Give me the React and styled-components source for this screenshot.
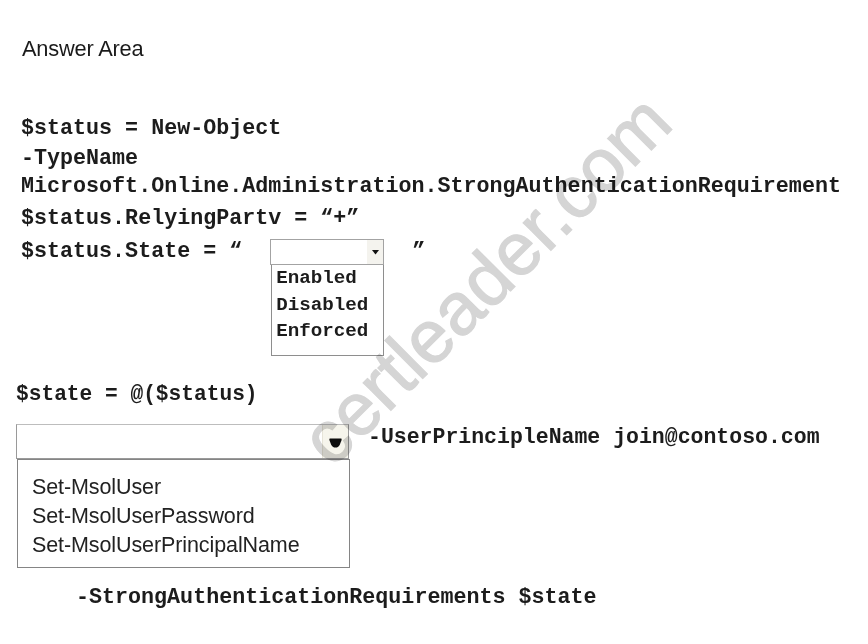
import React from "react";
import styled, { createGlobalStyle } from "styled-components";

const Global = createGlobalStyle`
  html, body { margin: 0; padding: 0; background: #ffffff; }
  body { font-family: "Liberation Sans", Arial, sans-serif; }
`;

const Page = styled.div`
  position: relative;
  width: 868px;
  height: 644px;
  overflow: hidden;
  background: #ffffff;
  color: #1b1b1b;
  display: flex;
  flex-direction: column;
  align-items: flex-start;
`;

const Title = styled.div`
  margin: 36px 0 0 22px;
  font-family: "Liberation Sans", Arial, sans-serif;
  font-size: 21.8px;
  line-height: 26px;
  letter-spacing: -0.2px;
  color: #1a1a1a;
`;

const CodeBlock = styled.div`
  display: flex;
  flex-direction: column;
  align-items: flex-start;
  margin-top: 52px;
  margin-left: 21px;
`;

const CodeLine = styled.div`
  font-family: "Liberation Mono", "Courier New", monospace;
  font-weight: bold;
  font-size: ${(p) => p.$size || 21.7}px;
  line-height: 30px;
  white-space: pre;
  margin-top: ${(p) => p.$gap || 0}px;
  margin-left: ${(p) => p.$indent || 0}px;
  color: #1c1c1c;
`;

const SelectRow = styled.div`
  display: flex;
  align-items: center;
  margin-top: ${(p) => p.$gap || 0}px;
`;

const SmallSelect = styled.div`
  position: relative;
  width: 114px;
  height: 26px;
  margin-left: 28px;
  margin-right: 28px;
  box-sizing: border-box;
  border: 1px solid #a3a3a3;
  background: #ffffff;
  display: flex;
  justify-content: flex-end;
`;

const SmallButton = styled.div`
  width: 16px;
  height: 100%;
  background: #f4f3ee;
  display: flex;
  align-items: center;
  justify-content: center;
`;

const SmallMenu = styled.div`
  position: absolute;
  left: 0;
  top: 25px;
  width: 113px;
  height: 91px;
  box-sizing: border-box;
  border: 1px solid #8e8e8e;
  border-top: none;
  background: #ffffff;
  padding: 0 0 0 4px;
`;

const SmallItem = styled.div`
  font-family: "Liberation Mono", "Courier New", monospace;
  font-weight: bold;
  font-size: 19.2px;
  line-height: 26.5px;
  white-space: pre;
  color: #1c1c1c;
`;

const Bottom = styled.div`
  display: flex;
  flex-direction: column;
  align-items: flex-start;
  margin-left: 16px;
`;

const StateLine = styled(CodeLine)`
  margin-top: 112px;
`;

const BigRow = styled.div`
  display: flex;
  align-items: flex-start;
  margin-top: 15px;
`;

const BigSelect = styled.div`
  position: relative;
  width: 333px;
  height: 35px;
  box-sizing: border-box;
  border: 1px solid #9a9a9a;
  border-top-color: #bdbdbd;
  background: #ffffff;
  display: flex;
  justify-content: flex-end;
`;

const BigButton = styled.div`
  width: 26px;
  height: 100%;
  box-sizing: border-box;
  border-left: 1px solid #e6e4d8;
  background: #f6f5ec;
  display: flex;
  align-items: center;
  justify-content: center;
  padding-top: 2px;
`;

const BigMenu = styled.div`
  position: absolute;
  left: 0;
  top: 34px;
  width: 333px;
  height: 109px;
  box-sizing: border-box;
  border: 1px solid #858585;
  background: #ffffff;
  padding: 13px 0 0 14px;
`;

const BigItem = styled.div`
  font-family: "Liberation Sans", Arial, sans-serif;
  font-size: 21.5px;
  line-height: 29px;
  letter-spacing: -0.1px;
  color: #222222;
  white-space: pre;
`;

const RowText = styled.div`
  font-family: "Liberation Mono", "Courier New", monospace;
  font-weight: bold;
  font-size: 21.5px;
  line-height: 26px;
  margin-left: 19px;
  white-space: pre;
  color: #1c1c1c;
`;

const LastLine = styled(CodeLine)`
  margin-top: 124px;
  margin-left: 60px;
`;

const Watermark = styled.div`
  position: absolute;
  left: 486px;
  top: 280px;
  transform: translate(-50%, -50%) rotate(-45deg);
  font-family: "Liberation Sans", Arial, sans-serif;
  font-size: 74px;
  line-height: 1;
  color: #d5d5d5;
  -webkit-text-stroke: 1.2px #d5d5d5;
  white-space: nowrap;
  pointer-events: none;
  mix-blend-mode: multiply;
  z-index: 2;
`;

const SmallArrow = () => (
  <svg width="7" height="5" viewBox="0 0 7 5">
    <path d="M0 0 L7 0 L3.5 4.5 Z" fill="#111" />
  </svg>
);

const BigArrow = () => (
  <svg width="13" height="10" viewBox="0 0 13 10">
    <path
      d="M1.2 0.6 L11.8 0.6 Q13 0.6 12.6 2 L11 6.2 Q9.6 9.6 6.5 9.6 Q3.4 9.6 2 6.2 L0.4 2 Q0 0.6 1.2 0.6 Z"
      fill="#0d0d0d"
    />
  </svg>
);

export default function App() {
  return (
    <>
      <Global />
      <Page>
        <Title>Answer Area</Title>
        <CodeBlock>
          <CodeLine>$status = New-Object</CodeLine>
          <CodeLine>-TypeName</CodeLine>
          <CodeLine $gap={-2}>Microsoft.Online.Administration.StrongAuthenticationRequirement</CodeLine>
          <CodeLine $gap={2}>$status.RelyingPartv = “+”</CodeLine>
          <SelectRow $gap={3}>
            <CodeLine>$status.State = “</CodeLine>
            <SmallSelect>
              <SmallButton>
                <SmallArrow />
              </SmallButton>
              <SmallMenu>
                <SmallItem>Enabled</SmallItem>
                <SmallItem>Disabled</SmallItem>
                <SmallItem>Enforced</SmallItem>
              </SmallMenu>
            </SmallSelect>
            <CodeLine>”</CodeLine>
          </SelectRow>
        </CodeBlock>
        <Bottom>
          <StateLine $size={21.2}>$state = @($status)</StateLine>
          <BigRow>
            <BigSelect>
              <BigButton>
                <BigArrow />
              </BigButton>
              <BigMenu>
                <BigItem>Set-MsolUser</BigItem>
                <BigItem>Set-MsolUserPassword</BigItem>
                <BigItem>Set-MsolUserPrincipalName</BigItem>
              </BigMenu>
            </BigSelect>
            <RowText>-UserPrincipleName join@contoso.com</RowText>
          </BigRow>
          <LastLine>-StrongAuthenticationRequirements $state</LastLine>
        </Bottom>
        <Watermark>certleader.com</Watermark>
      </Page>
    </>
  );
}
